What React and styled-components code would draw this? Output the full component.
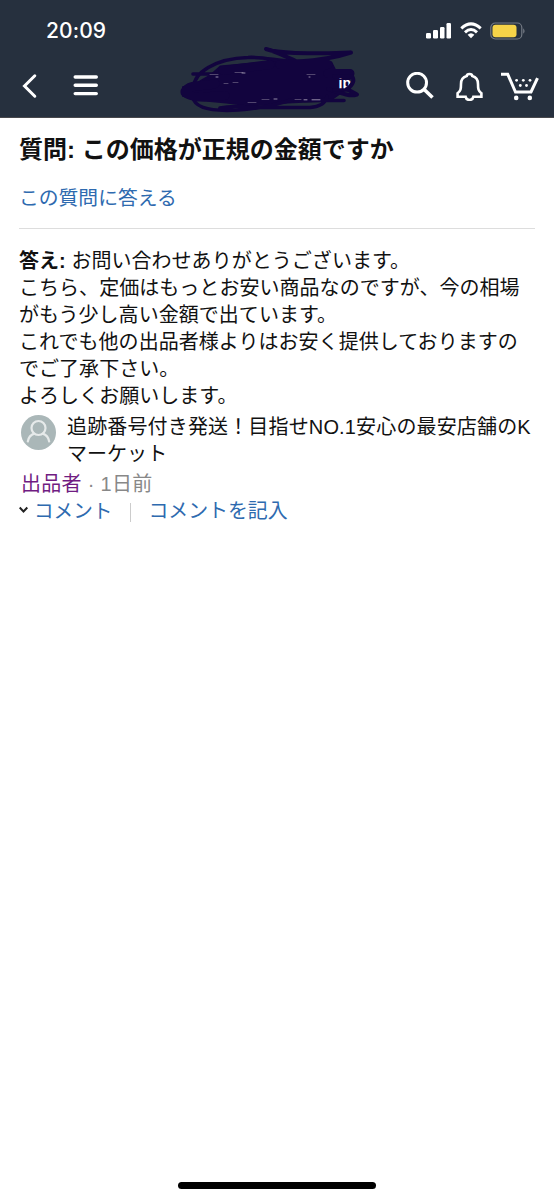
import React from 'react';
import styled, { createGlobalStyle } from 'styled-components';

const GlobalStyle = createGlobalStyle`
  * { box-sizing: border-box; }
  body {
    margin: 0;
    background: #fff;
    color: #111;
    font-family: "Liberation Sans", "Noto Sans CJK JP", sans-serif;
  }
`;

const Screen = styled.div`
  display: flex;
  flex-direction: column;
  width: 554px;
  height: 1200px;
  background: #fff;
  overflow: hidden;
`;

const Header = styled.header`
  height: 118px;
  flex: none;
  background: #26303e;
  border-bottom: 1px solid #48484c;
  color: #fff;
`;

const StatusBar = styled.div`
  display: flex;
  justify-content: space-between;
  align-items: center;
  height: 60px;
  padding: 1px 29px 0 46px;
`;

const Clock = styled.span`
  font: 500 21px/24px Inter, sans-serif;
  letter-spacing: 0.1px;
`;

const StatusIcons = styled.div`
  display: flex;
  align-items: center;
  gap: 8px;
`;

const NavBar = styled.nav`
  display: flex;
  align-items: center;
  height: 57px;
  margin-top: -7px;
  padding: 8px 14px 0 20px;
`;

const NavButton = styled.button`
  display: flex;
  padding: 0;
  border: 0;
  background: none;
  color: inherit;
  margin-left: ${(p) => p.$gap || 0}px;
`;

const Logo = styled.div`
  display: grid;
  margin: -9px 0 0 77px;
  width: 190px;
  height: 72px;
  > * { grid-area: 1 / 1; }
`;

const LogoText = styled.span`
  place-self: start end;
  margin: 29px 15px 0 0;
  font: 700 14px/18px "Liberation Sans", sans-serif;
`;

const Content = styled.main`
  flex: 1;
  padding: 17px 19px 0;
`;

const Title = styled.h1`
  margin: 0;
  font-size: 24px;
  line-height: 30px;
  font-weight: 700;
  white-space: pre;
`;

const Link = styled.a`
  color: ${(p) => (p.$visited ? '#701c82' : '#2e6aaf')};
  font-size: ${(p) => p.$size || 20}px;
`;

const AnswerLink = styled.div`
  margin-top: 20px;
  padding-bottom: 15px;
  border-bottom: 1px solid #ddd;
  line-height: 27px;
`;

const Text = styled.p`
  margin: 0;
  font-size: 20px;
  line-height: 27px;
  letter-spacing: ${(p) => p.$spacing || 0.04}px;
  white-space: nowrap;
`;

const Answer = styled.section`
  margin-top: 19px;
`;

const Seller = styled.div`
  display: flex;
  gap: 11px;
  margin-top: 4px;
  padding-left: 2px;
`;

const Avatar = styled.svg`
  flex: none;
  margin-top: 1px;
`;

const Meta = styled.div`
  margin: 3px 0 0 2px;
  color: #888;
  font-size: 20px;
  line-height: 27px;
  letter-spacing: 0.3px;
  white-space: pre;
`;

const Comments = styled.div`
  display: flex;
  align-items: center;
  height: 26px;
  line-height: 26px;
`;

const Separator = styled.span`
  width: 1px;
  height: 19px;
  margin: 2px 17px 0 18px;
  background: #ccc;
`;

const HomeIndicator = styled.div`
  align-self: center;
  width: 198px;
  height: 7px;
  margin-bottom: 11px;
  border-radius: 4px;
  background: #000;
`;

const lines = [
  'こちら、定価はもっとお安い商品なのですが、今の相場',
  'がもう少し高い金額で出ています。',
  'これでも他の出品者様よりはお安く提供しておりますの',
  'でご了承下さい。',
  'よろしくお願いします。',
];

const Signal = () => (
  <svg width="26" height="17" viewBox="0 0 26 17" fill="#fff">
    <rect x="0" y="11" width="5" height="5.5" rx="1.2" />
    <rect x="7" y="8" width="5" height="8.5" rx="1.2" />
    <rect x="14" y="5" width="4.5" height="11.5" rx="1.2" />
    <rect x="20.5" y="1" width="4.5" height="15.5" rx="1.2" />
  </svg>
);

const Wifi = () => (
  <svg width="22" height="17" viewBox="0 0 22 17" fill="none" stroke="#fff" strokeWidth="3">
    <path d="M1.3 6.4Q11-2.6 20.7 6.4" />
    <path d="M5 10.3Q11 4.8 17 10.3" />
    <path d="M7.6 12.8Q11 9.7 14.4 12.8L11 16.3Z" fill="#fff" stroke="none" />
  </svg>
);

const Battery = () => (
  <svg width="35" height="18" viewBox="0 0 35 18">
    <rect x=".8" y="1" width="31" height="16" rx="4.5" fill="none" stroke="#747a84" strokeWidth="1.2" />
    <rect x="2.5" y="2.7" width="24" height="12.6" rx="3" fill="#f6d348" />
    <path d="M33.2 6.2Q36 9 33.2 11.8Z" fill="#747a84" />
  </svg>
);

const Scribble = () => (
  <svg width="190" height="72" viewBox="6 4.5 190 72" fill="none" stroke="#12043e" strokeLinecap="round" strokeLinejoin="round">
    <path fill="#12043e" stroke="none" d="M50 25L96 21L98 18L162 21L166 29L184 31L176 50L160 61L118 63L80 66L56 63L24 60L12 56L12 46L26 42L40 34Z" />
    <path strokeWidth="4" d="M96 8.5C103 11 113 12 125 12.5C145 13 165 13 181 12C166 17 145 20 128 21M100 9.5C108 12 117 17 125 20" />
    <path strokeWidth="3.6" d="M24 46C24 33 44 18 78 17C97 16 110 22 135 21M23 33.5H45M23 57C25 68 43 71 68 69.5C91 68 110 63 123 59M50 67.5C65 64 73 67 88 67H140C153 66 156 61 157 56M135 60H174" />
    <path strokeWidth="9" d="M15 51C20 42 35 47 45 43M15 52C24 60 43 55 55 55M53 30L100 24M110 24H158M158 33H180" />
    <path stroke="#51456e" strokeWidth="1" d="M40 34H48M65 32H73M54 43H58M63 42H68M137 34H145M78 62H86M92 59H99M125 59H131" />
    <path stroke="#b5adc2" strokeWidth=".8" d="M72 32.5H75M46 36.5H48M139 36.5H140M104 58.5H107M134 59.3H137M142 59.3H150" />
  </svg>
);

const FrontStrokes = () => (
  <svg width="190" height="72" viewBox="6 4.5 190 72" fill="none" stroke="#12043e" strokeLinecap="round" strokeLinejoin="round">
    <path strokeWidth="4" d="M164 35.8H182C185 40 183 44 177 48.5L187 54C178 57 168 51 158 48.500" />
    <path strokeWidth="3.6" d="M164 49.500H179" />
  </svg>
);

export default function App() {
  return (
    <>
      <GlobalStyle />
      <Screen>
        <Header>
          <StatusBar>
            <Clock>20:09</Clock>
            <StatusIcons><Signal /><Wifi /><Battery /></StatusIcons>
          </StatusBar>
          <NavBar>
            <NavButton aria-label="戻る">
              <svg width="18" height="26" viewBox="0 0 18 26" fill="none" stroke="#fff" strokeWidth="3" strokeLinecap="round" strokeLinejoin="miter">
                <path d="M14.8 2.8L4.5 13L14.8 23.2" />
              </svg>
            </NavButton>
            <NavButton aria-label="メニュー" $gap={35}>
              <svg width="26" height="24" viewBox="0 0 26 24" stroke="#fff" strokeWidth="3.4" strokeLinecap="round">
                <path d="M2.2 3H23.3M2.2 11.3H23.3M2.2 19.6H23.3" />
              </svg>
            </NavButton>
            <Logo>
              <Scribble />
              <LogoText>jp</LogoText>
              <FrontStrokes />
            </Logo>
            <NavButton aria-label="検索" $gap={39}>
              <svg width="30" height="28" viewBox="0 0 30 28" fill="none" stroke="#fff" strokeWidth="3">
                <circle cx="12.1" cy="10.7" r="9.4" />
                <path d="M18.7 17L27.5 25.5" strokeWidth="3.6" />
              </svg>
            </NavButton>
            <NavButton aria-label="通知" $gap={20}>
              <svg width="28" height="30" viewBox="0 0 28 30" fill="none" stroke="#fff" strokeWidth="2.6" strokeLinejoin="miter">
                <path d="M11.7 5C12 2.4 17 2.4 17.3 5C21.5 6.1 23 9.2 23 13C23 18 23.3 20 26.4 22.2V25.7H18.4C17.6 30 11.4 30 10.6 25.7H2.6V22.2C5.7 20 6 18 6 13C6 9.2 7.5 6.1 11.7 5Z" />
              </svg>
            </NavButton>
            <NavButton aria-label="カート" $gap={17}>
              <svg width="39" height="30" viewBox="0 0 39 30" fill="none" stroke="#fff" strokeWidth="3">
                <path d="M1 3.2H7.7L15.5 21H31L37.5 7.2" />
                <g fill="#fff" stroke="none">
                  <circle cx="16.2" cy="26.9" r="2.3" /><circle cx="29.8" cy="26.9" r="2.3" />
                  <circle cx="16.6" cy="9.3" r="1.4" /><circle cx="23.3" cy="9.3" r="1.4" /><circle cx="30" cy="9.3" r="1.4" />
                  <circle cx="20.3" cy="14.5" r="1.4" /><circle cx="26.5" cy="14.5" r="1.4" />
                </g>
              </svg>
            </NavButton>
          </NavBar>
        </Header>
        <Content>
          <Title>質問: この価格が正規の金額ですか</Title>
          <AnswerLink><Link $size={19.8}>この質問に答える</Link></AnswerLink>
          <Answer>
            <Text><b>答え:</b> お問い合わせありがとうございます。</Text>
            {lines.map((line) => <Text key={line}>{line}</Text>)}
          </Answer>
          <Seller>
            <Avatar width="35" height="35" viewBox="0 0 35 35">
              <circle cx="17.5" cy="17.5" r="17.5" fill="#aab7b8" />
              <g fill="none" stroke="#e6eaea" strokeWidth="2.2" strokeLinecap="round">
                <circle cx="17.5" cy="13" r="7" />
                <path d="M6.8 26.5C7.5 22.5 10 19.5 13.3 18.6M28.2 26.5C27.5 22.5 25 19.5 21.7 18.6" />
              </g>
            </Avatar>
            <div>
              <Text $spacing={0.15}>追跡番号付き発送！目指せNO.1安心の最安店舗のK</Text>
              <Text>マーケット</Text>
            </div>
          </Seller>
          <Meta><Link $visited>出品者</Link> · 1日前</Meta>
          <Comments>
            <svg width="15" height="10" viewBox="0 0 15 10" fill="none" stroke="#222" strokeWidth="2">
              <path d="M.7 1.5L4.5 5.5L8.3 1.5" />
            </svg>
            <Link $size={19.6}>コメント</Link>
            <Separator />
            <Link $size={19.9}>コメントを記入</Link>
          </Comments>
        </Content>
        <HomeIndicator />
      </Screen>
    </>
  );
}
